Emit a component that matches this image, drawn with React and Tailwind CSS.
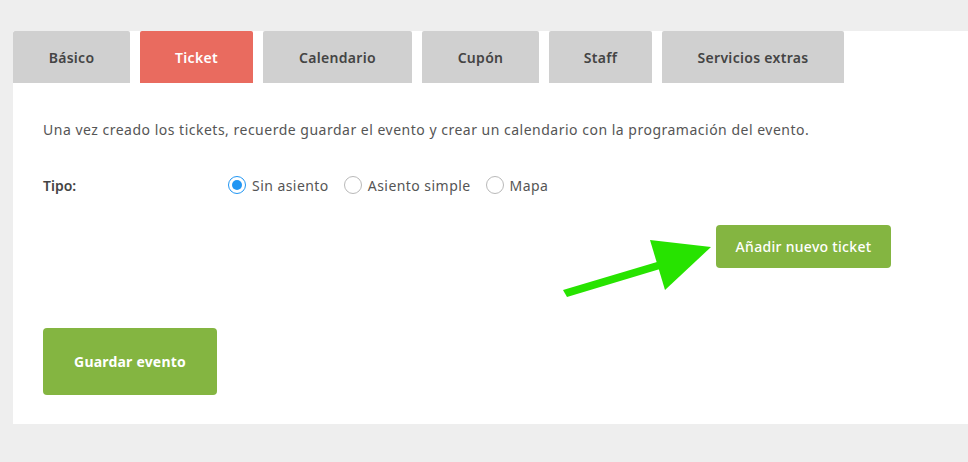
import { useState } from 'react';

const TABS = [
  { label: 'Básico', w: 'w-[117px]' },
  { label: 'Ticket', w: 'w-[113px]' },
  { label: 'Calendario', w: 'w-[149px]' },
  { label: 'Cupón', w: 'w-[117px]' },
  { label: 'Staff', w: 'w-[103px]' },
  { label: 'Servicios extras', w: 'w-[182px]' },
];

const TIPOS = ['Sin asiento', 'Asiento simple', 'Mapa'];

function Radio({ checked }) {
  return (
    <span
      className={
        'flex h-[18px] w-[18px] items-center justify-center rounded-full border bg-white ' +
        (checked ? 'border-[#2196f3]' : 'border-[#b9b9b9]')
      }
    >
      {checked && <span className="h-[10px] w-[10px] rounded-full bg-[#2196f3]" />}
    </span>
  );
}

export default function App() {
  const [tab, setTab] = useState('Ticket');
  const [tipo, setTipo] = useState('Sin asiento');

  return (
    <div className="relative min-h-[462px] w-[968px] bg-[#eeeeee] pt-[31px] font-['Noto_Sans',sans-serif] text-[#555]">
      <div className="ml-[13px] bg-white pb-[29px]">
        <div className="flex h-[52px] gap-[10px]">
          {TABS.map((t) => (
            <button
              key={t.label}
              type="button"
              onClick={() => setTab(t.label)}
              className={
                'flex items-center justify-center rounded-t-[2px] text-[14px] font-semibold tracking-[0.3px] ' +
                t.w +
                (tab === t.label ? ' bg-[#e96b5f] text-white' : ' bg-[#d0d0d0] text-[#444]')
              }
            >
              {t.label}
            </button>
          ))}
        </div>

        <div className="px-[30px] pt-[37px]">
          <p className="text-[14px] leading-[20px] tracking-[0.5px]">
            Una vez creado los tickets, recuerde guardar el evento y crear un calendario con la programación del evento.
          </p>

          <div className="mt-[35px] flex h-[20px] items-center text-[14px]">
            <span className="w-[185px] font-semibold text-[#444]">Tipo:</span>
            <div className="flex items-center tracking-[0.45px]">
              {TIPOS.map((t) => (
                <label
                  key={t}
                  onClick={() => setTipo(t)}
                  className="mr-[15px] flex cursor-pointer items-center gap-[6px]"
                >
                  <Radio checked={tipo === t} />
                  {t}
                </label>
              ))}
            </div>
          </div>

          <div className="mr-[47px] mt-[30px] flex justify-end">
            <button
              type="button"
              className="h-[43px] w-[175px] rounded-[4px] bg-[#84b541] text-[14px] font-medium tracking-[0.3px] text-white"
            >
              Añadir nuevo ticket
            </button>
          </div>

          <button
            type="button"
            className="mt-[60px] h-[67px] w-[174px] rounded-[4px] bg-[#84b541] text-[14px] font-bold tracking-[0.2px] text-white"
          >
            Guardar evento
          </button>
        </div>
      </div>

      <svg className="pointer-events-none absolute left-0 top-0" width="968" height="462" viewBox="0 0 968 462">
        <polygon points="563,290 567,297 660,269 657,262" fill="#27e300" />
        <polygon points="650,240 711,247 665,290" fill="#27e300" />
      </svg>
    </div>
  );
}
